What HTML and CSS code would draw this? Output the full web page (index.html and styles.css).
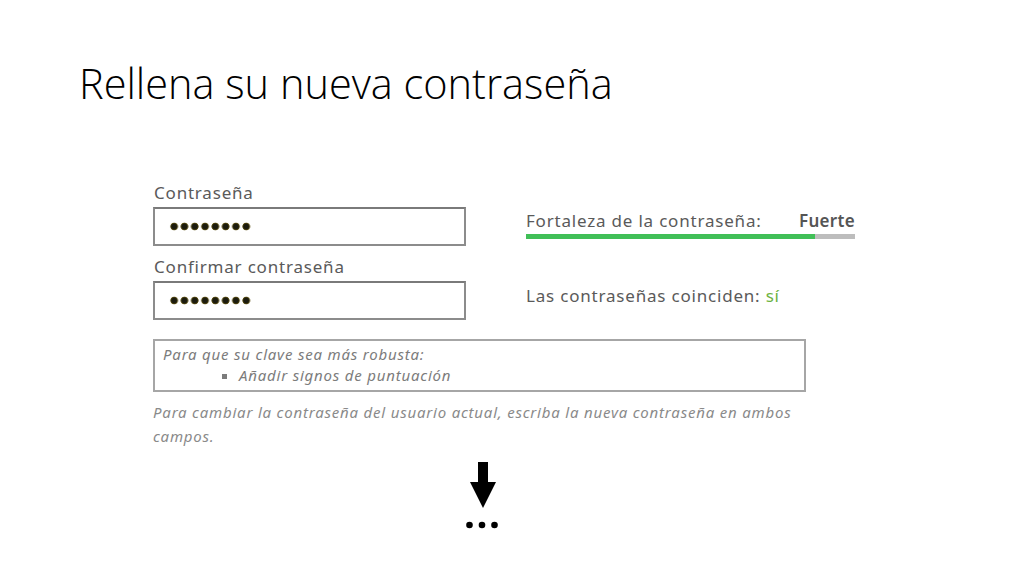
FILE: index.html
```html
<!DOCTYPE html>
<html>
<head>
  <meta charset="utf-8">
  <title>Rellena su nueva contraseña</title>
  <link rel="stylesheet" href="styles.css">
</head>
<body>
  <main class="slide">
    <h1 class="slide-title">Rellena su nueva contraseña</h1>

    <div class="pw-form">
      <div class="pw-row">
        <div class="pw-fields">
          <label class="pw-label" for="pass1">Contraseña</label>
          <div class="pw-input" id="pass1"><span class="dots"></span></div>
          <label class="pw-label" for="pass2">Confirmar contraseña</label>
          <div class="pw-input" id="pass2"><span class="dots"></span></div>
        </div>
        <div class="pw-status">
          <div class="strength-text">
            <span>Fortaleza de la contraseña:</span>
            <span class="strength-value">Fuerte</span>
          </div>
          <div class="strength-bar"><div class="strength-fill" style="width: 87.8%"></div></div>
          <div class="match">Las contraseñas coinciden: <span class="match-yes">sí</span></div>
        </div>
      </div>

      <div class="hint-box">
        <p>Para que su clave sea más robusta:</p>
        <ul>
          <li>Añadir signos de puntuación</li>
        </ul>
      </div>

      <p class="description">Para cambiar la contraseña del usuario actual, escriba la nueva contraseña en ambos campos.</p>
    </div>

    <div class="next">
      <svg width="32" height="70" viewBox="0 0 32 70">
        <rect x="12" y="2" width="10" height="22" fill="#000"/>
        <polygon points="4,22 30,22 17,48" fill="#000"/>
        <circle cx="3.5" cy="65" r="3.3" fill="#000"/>
        <circle cx="16" cy="65" r="3.3" fill="#000"/>
        <circle cx="28.5" cy="65" r="3.3" fill="#000"/>
      </svg>
    </div>
  </main>
</body>
</html>
```

FILE: styles.css
```css
/* slide with embedded password form */
body {
  margin: 0;
  background: #ffffff;
  font-family: "Noto Sans", "DejaVu Sans", sans-serif;
}
.slide {
  width: 1024px;
  height: 576px;
  overflow: hidden;
}
.slide-title {
  margin: 0;
  padding: 55px 0 0 79px;
  font-family: "Open Sans", sans-serif;
  font-weight: 300;
  font-size: 41.5px;
  line-height: 56px;
  color: #000000;
}
.pw-form {
  margin: 71px 0 0 153px;
  width: 705px;
}
.pw-row {
  display: flex;
}
.pw-fields {
  width: 313px;
  display: flex;
  flex-direction: column;
}
.pw-label {
  font-size: 17px;
  line-height: 22px;
  letter-spacing: 0.8px;
  color: #5a5a5a;
  padding-left: 1px;
  margin-bottom: 3px;
}
.pw-input {
  box-sizing: border-box;
  height: 39px;
  border: 2px solid #8c8c8c;
  border-top-color: #7a7a7a;
  display: flex;
  align-items: center;
  padding-left: 14px;
  margin-bottom: 10px;
}
.dots {
  width: 82px;
  height: 9px;
  background: radial-gradient(circle, #1b1b0e 2.6px, #5e5012 3.5px, transparent 4.2px) 0 0 / 10.3px 9px repeat-x;
}
.pw-status {
  margin-left: 60px;
  width: 329px;
  padding-top: 28px;
}
.strength-text {
  display: flex;
  justify-content: space-between;
  font-size: 17px;
  line-height: 22px;
  letter-spacing: 0.8px;
  color: #5a5a5a;
}
.strength-value {
  font-weight: 600;
  letter-spacing: 0.3px;
  color: #555555;
}
.strength-bar {
  margin-top: 2px;
  height: 5px;
  background: #bdbdbd;
}
.strength-fill {
  height: 100%;
  background: #40bf57;
}
.match {
  margin-top: 46px;
  font-size: 17px;
  line-height: 22px;
  letter-spacing: 0.8px;
  color: #5a5a5a;
}
.match-yes {
  color: #6db33f;
}
.hint-box {
  box-sizing: border-box;
  margin-top: 9px;
  width: 653px;
  border: 2px solid #a6a6a6;
  padding: 2.5px 0 4.5px 8px;
  font-style: italic;
  font-size: 15px;
  line-height: 21px;
  letter-spacing: 0.8px;
  color: #7c7c7c;
}
.hint-box p {
  margin: 0;
}
.hint-box ul {
  margin: 0;
  padding-left: 76px;
  list-style: square;
}
.description {
  margin: 8px 0 0 0;
  width: 660px;
  font-style: italic;
  font-size: 15px;
  line-height: 24px;
  letter-spacing: 0.8px;
  color: #8a8a8a;
}
.next {
  margin: 12px 0 0 466px;
}
.next svg {
  display: block;
}
```
